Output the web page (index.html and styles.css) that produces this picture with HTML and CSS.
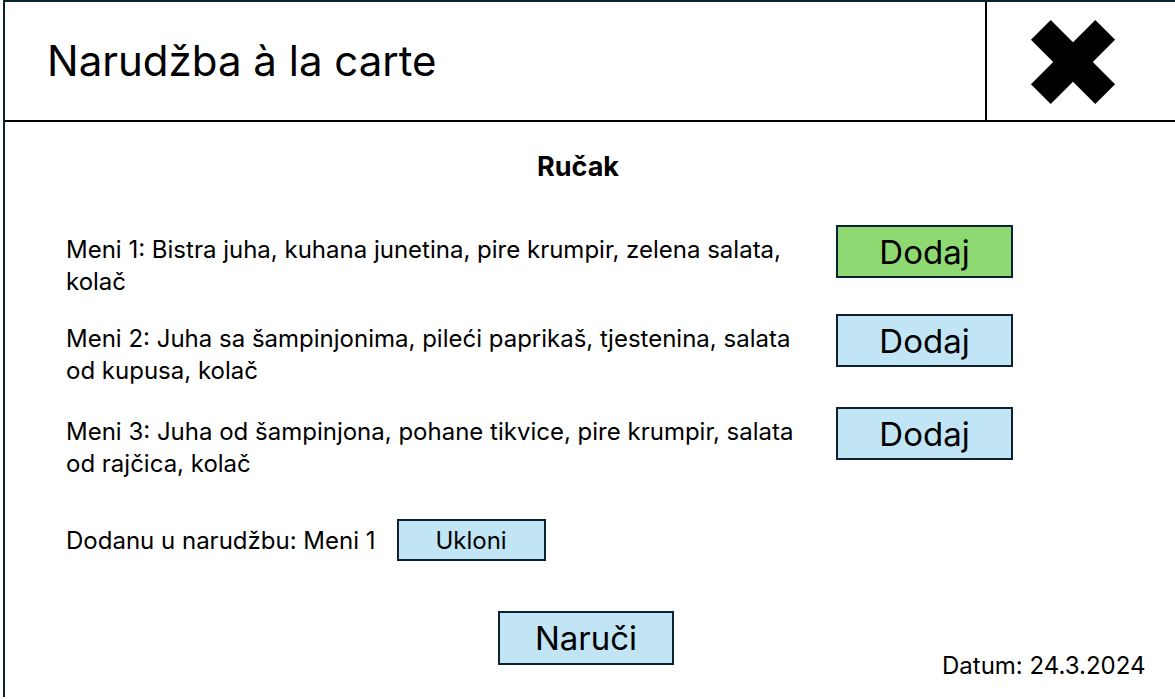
FILE: index.html
```html
<!DOCTYPE html>
<html lang="hr">
<head>
<meta charset="utf-8">
<title>Narudžba à la carte</title>
<link rel="stylesheet" href="styles.css">
</head>
<body>
<div class="frame">
  <header class="header">
    <h1 class="title">Narudžba à la carte</h1>
    <div class="close">
      <svg width="86" height="86" viewBox="0 0 86 86" aria-hidden="true">
        <g transform="translate(43 43) rotate(45)">
          <rect x="-14" y="-45.5" width="28" height="91" fill="#000"/>
          <rect x="-45.5" y="-14" width="91" height="28" fill="#000"/>
        </g>
      </svg>
    </div>
  </header>
  <main class="content">
    <h2 class="section-title">Ručak</h2>
    <div class="menu-row">
      <p class="menu-text">Meni 1: Bistra juha, kuhana junetina, pire krumpir, zelena salata, kolač</p>
      <button class="btn btn-add btn-green">Dodaj</button>
    </div>
    <div class="menu-row">
      <p class="menu-text">Meni 2: Juha sa šampinjonima, pileći paprikaš, tjestenina, salata od kupusa, kolač</p>
      <button class="btn btn-add">Dodaj</button>
    </div>
    <div class="menu-row menu-row-last">
      <p class="menu-text">Meni 3: Juha od šampinjona, pohane tikvice, pire krumpir, salata od rajčica, kolač</p>
      <button class="btn btn-add">Dodaj</button>
    </div>
    <div class="added-row">
      <span class="added-text">Dodanu u narudžbu: Meni 1</span>
      <button class="btn btn-remove">Ukloni</button>
    </div>
    <div class="footer">
      <button class="btn btn-order">Naruči</button>
      <span class="date">Datum: 24.3.2024</span>
    </div>
  </main>
</div>
</body>
</html>
```
FILE: styles.css
```css
html, body {
  margin: 0;
  padding: 0;
  background: #fff;
}
body {
  font-family: "Inter", "Liberation Sans", sans-serif;
  color: #000;
  width: 1175px;
  height: 699px;
  overflow: hidden;
}
.frame {
  margin-left: 3px;
  border-left: 2px solid #0b2230;
  border-top: 2px solid #0b2230;
  height: 697px;
  box-sizing: border-box;
  display: flex;
  flex-direction: column;
}
.header {
  display: flex;
  height: 120px;
  border-bottom: 2px solid #000;
  box-sizing: border-box;
}
.title {
  flex: 1;
  margin: 0;
  padding-left: 42px;
  font-weight: 400;
  font-size: 42px;
  display: flex;
  align-items: center;
  padding-bottom: 2px;
}
.close {
  width: 190px;
  border-left: 2px solid #000;
  display: flex;
  align-items: center;
  justify-content: center;
  padding-right: 16px;
  padding-top: 2px;
  box-sizing: border-box;
}
.content {
  padding-left: 61px;
  flex: 1;
  display: flex;
  flex-direction: column;
}
.section-title {
  margin: 30px 0 0 0;
  font-size: 27px;
  font-weight: 700;
  text-align: center;
  padding-right: 85px;
  line-height: 30px;
}
.menu-row {
  display: flex;
  align-items: flex-start;
  margin-top: 43px;
}
.menu-row + .menu-row {
  margin-top: 16px;
}
.menu-row + .menu-row-last {
  margin-top: 20px;
}
.menu-text {
  width: 735px;
  margin: 9px 0 0 0;
  font-size: 24px;
  line-height: 32px;
}
.btn {
  font-family: inherit;
  color: #000;
  background: #c1e5f5;
  border: 2px solid #0b2230;
  padding: 0;
  box-sizing: border-box;
}
.btn-add {
  margin-left: 35px;
  width: 177px;
  height: 53px;
  font-size: 33px;
}
.btn-green {
  background: #8fd973;
}
.added-row {
  display: flex;
  align-items: center;
  margin-top: 39px;
}
.added-text {
  font-size: 24px;
}
.btn-remove {
  margin-left: 21px;
  width: 149px;
  height: 42px;
  font-size: 24px;
}
.footer {
  display: flex;
  align-items: flex-start;
  margin-top: 50px;
}
.btn-order {
  margin-left: 432px;
  width: 176px;
  height: 54px;
  font-size: 33px;
}
.date {
  margin-left: 268px;
  margin-top: 40px;
  font-size: 24px;
}
```
